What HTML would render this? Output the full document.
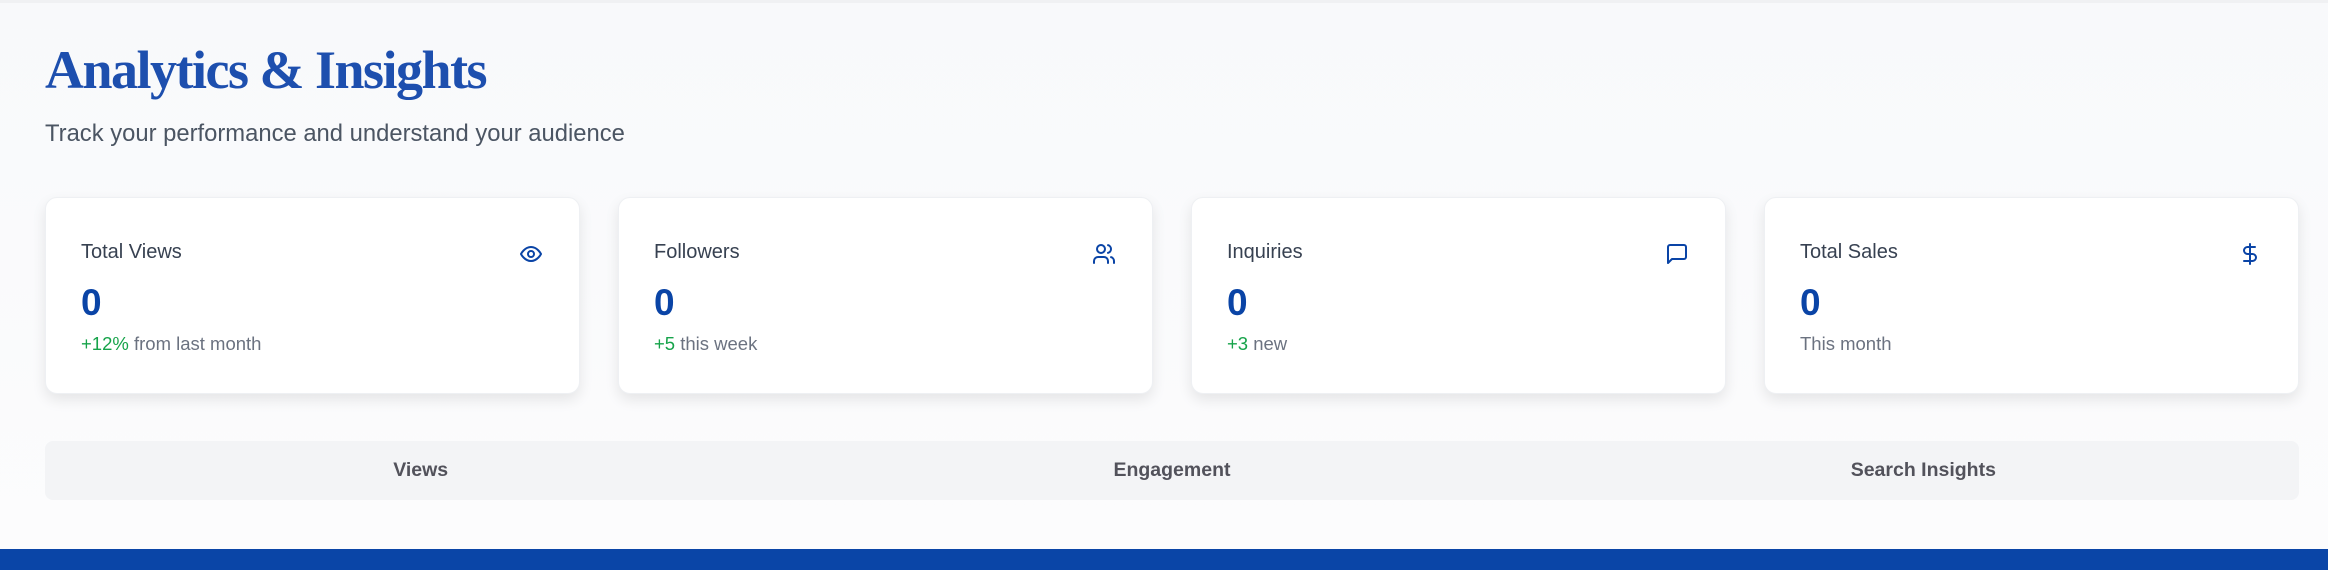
<!DOCTYPE html>
<html><head><meta charset="utf-8"><style>
*{margin:0;padding:0;box-sizing:border-box}
html,body{width:2328px;height:570px;overflow:hidden}
body{background:linear-gradient(#f8f9fb,#fcfcfd);font-family:"Liberation Sans",sans-serif;position:relative;border-top:3px solid #f0f1f3}
h1{position:absolute;left:45px;top:38px;font-family:"Liberation Serif",serif;font-weight:bold;font-size:54px;letter-spacing:-1.5px;color:#1d4fae;line-height:1.1}
.sub{position:absolute;left:45px;top:117px;font-size:23.8px;color:#4b5563}
.card{position:absolute;top:194px;width:535px;height:197px;background:#fff;border-radius:12px;border:1px solid #eef0f3;box-shadow:0 6px 14px rgba(0,0,0,.09)}
.lbl{position:absolute;left:35px;top:43px;font-size:20px;color:#374151}
.num{position:absolute;left:35px;top:84px;font-size:37px;font-weight:bold;color:#0a44a6}
.s{position:absolute;left:35px;top:135px;font-size:18.5px;color:#6b7280}
.s b{font-weight:normal;color:#16a34a}
.ic{position:absolute;right:36px;top:44px;width:24px;height:24px}
.tabs{position:absolute;left:45px;top:438px;width:2254px;height:59px;background:#f3f4f6;border-radius:8px;display:flex}
.tabs div{flex:1;text-align:center;line-height:59px;font-size:19.5px;color:#52525b;font-weight:bold}
.bar{position:absolute;left:0;top:546px;width:2328px;height:24px;background:#0a45a7}
</style></head><body>
<h1>Analytics &amp; Insights</h1>
<div class="sub">Track your performance and understand your audience</div>

<div class="card" style="left:45px"><div class="lbl">Total Views</div>
<svg class="ic" viewBox="0 0 24 24" fill="none" stroke="#0a44a6" stroke-width="2" stroke-linecap="round" stroke-linejoin="round"><path d="M2 12s3.5-7 10-7 10 7 10 7-3.5 7-10 7S2 12 2 12z"/><circle cx="12" cy="12" r="3"/></svg>
<div class="num">0</div><div class="s"><b>+12%</b> from last month</div></div>

<div class="card" style="left:618px"><div class="lbl">Followers</div>
<svg class="ic" viewBox="0 0 24 24" fill="none" stroke="#0a44a6" stroke-width="2" stroke-linecap="round" stroke-linejoin="round"><path d="M16 21v-2a4 4 0 0 0-4-4H6a4 4 0 0 0-4 4v2"/><circle cx="9" cy="7" r="4"/><path d="M22 21v-2a4 4 0 0 0-3-3.87"/><path d="M16 3.13a4 4 0 0 1 0 7.75"/></svg>
<div class="num">0</div><div class="s"><b>+5</b> this week</div></div>

<div class="card" style="left:1191px"><div class="lbl">Inquiries</div>
<svg class="ic" viewBox="0 0 24 24" fill="none" stroke="#0a44a6" stroke-width="2" stroke-linecap="round" stroke-linejoin="round"><path d="M21 15a2 2 0 0 1-2 2H7l-4 4V5a2 2 0 0 1 2-2h14a2 2 0 0 1 2 2z"/></svg>
<div class="num">0</div><div class="s"><b>+3</b> new</div></div>

<div class="card" style="left:1764px"><div class="lbl">Total Sales</div>
<svg class="ic" viewBox="0 0 24 24" fill="none" stroke="#0a44a6" stroke-width="2" stroke-linecap="round" stroke-linejoin="round"><path d="M12 2v20"/><path d="M17 5H9.5a3.5 3.5 0 0 0 0 7h5a3.5 3.5 0 0 1 0 7H6"/></svg>
<div class="num">0</div><div class="s">This month</div></div>

<div class="tabs"><div>Views</div><div>Engagement</div><div>Search Insights</div></div>
<div class="bar"></div>
</body></html>
